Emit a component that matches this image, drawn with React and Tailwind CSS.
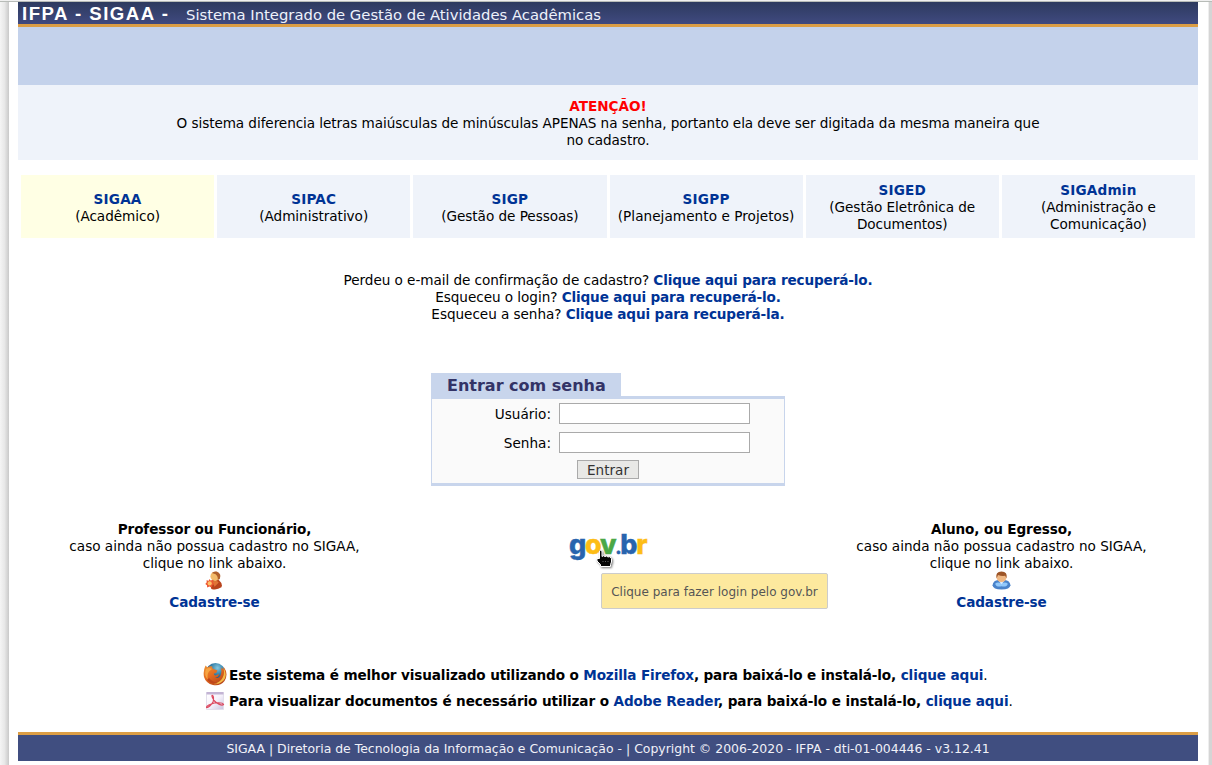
const tabs = [
  { name: 'SIGAA', lines: ['(Acadêmico)'], active: true },
  { name: 'SIPAC', lines: ['(Administrativo)'] },
  { name: 'SIGP', lines: ['(Gestão de Pessoas)'] },
  { name: 'SIGPP', lines: ['(Planejamento e Projetos)'] },
  { name: 'SIGED', lines: ['(Gestão Eletrônica de', 'Documentos)'] },
  { name: 'SIGAdmin', lines: ['(Administração e', 'Comunicação)'] },
];

function Link({ children, className = '' }) {
  return <a href="#" className={`font-bold text-[#003395] ${className}`}>{children}</a>;
}

function Header() {
  return (
    <header className="flex h-[25px] items-start whitespace-nowrap border-b-[3px] border-[#dc9e45] bg-linear-to-b from-[#2d3a5f] to-[#404a80] text-white">
      <h1 className="ml-[4px] w-[164px] font-['Liberation_Sans',sans-serif] text-[18.6px] font-bold leading-[23px] tracking-[1.5px]">IFPA - SIGAA -</h1>
      <span className="pt-[3px] text-[14.8px] leading-5 text-[#eef2fb]">Sistema Integrado de Gestão de Atividades Acadêmicas</span>
    </header>
  );
}

function TeacherIcon() {
  return (
    <svg className="-mt-px mr-[2px]" width="19" height="19" viewBox="0 0 18 18">
      <path d="M5 11 Q9 7 14 8.5 Q18 12 16.5 15.5 Q12 18.5 7 17 Z" fill="#b8431c" />
      <path d="M8 10 Q12 8 14 11 L10 15Z" fill="#df7436" />
      <circle cx="10.5" cy="5" r="4.4" fill="#f3bc6b" />
      <path d="M7.5 2 Q9 0 12 .5 Q17 2.5 15 7.5 L13 8.5 Q13.5 5 11 3Z" fill="#b0602b" />
      <path d="m5 7.500 1.300 1.500 2.500-.6-.5 2.500 1.500 1.500-1.900 1.200-.3 2.100-2.400-.9L3 15.700l-.2-2.200L1.200 12.200l1.400-1.500-.2-2 2.200.5Z" fill="#ec5833" />
      <circle cx="5.400" cy="11.800" r="2" fill="#ffc067" />
    </svg>
  );
}

function StudentIcon() {
  return (
    <svg className="-mt-px" width="19" height="19" viewBox="0 0 18 18">
      <path d="M.5 13.5 Q1 9 6 8.5 H12 Q17 9 17.5 13.5 Q17 17.5 9 17.5 Q1 17.5 .5 13.5Z" fill="#4a83ca" />
      <path d="M3 12 Q5 10 9 11.5 Q13 10 15 12 Q14 15.5 9 14.5 Q4 15.5 3 12Z" fill="#92c9fb" />
      <path d="M6 9 L9 12.5 L12 9Z" fill="#dcecff" />
      <circle cx="9" cy="5.8" r="4.7" fill="#efb884" />
      <path d="M4.2 7 Q3 .5 9 .5 Q15 .5 13.8 7 L12.5 4.5 Q9 5 5.7 3.8Z" fill="#9d5527" />
    </svg>
  );
}

function FirefoxIcon() {
  return (
    <svg className="-mt-[2px]" width="24" height="24" viewBox="0 0 24 24">
      <defs>
        <radialGradient id="globe" cx=".6" cy=".25" r=".7"><stop stopColor="#86c8df" /><stop offset=".45" stopColor="#3581aa" /><stop offset="1" stopColor="#182a5a" /></radialGradient>
        <linearGradient id="fox" x2=".7" y2="1"><stop stopColor="#ee9435" /><stop offset=".5" stopColor="#e36b20" /><stop offset="1" stopColor="#b3421a" /></linearGradient>
      </defs>
      <circle cx="12.5" cy="11" r="10" fill="url(#globe)" />
      <path d="M2.500 3.500 L4.500 5.500Q7 3.500 9.500 4.500Q8.500 6 10.500 7L14.500 8.500Q14 11 11 11.500Q10.500 13 12.500 13.500L16 12Q15.500 15.500 12 15.500Q16 17 17.500 13.500Q19 10 18 5.500L20.500 7.500L20.500 4.500Q26 12 21.500 19Q17 24.500 10 23Q3 21.500 1 15Q-.2 9 2.500 3.500Z" fill="url(#fox)" />
      <path d="M20.500 6Q25 13 20.500 18.500Q16 23 10.500 22Q17 20.500 19.500 16Q22 12 20.500 6Z" fill="#f3bb48" />
      <path d="M3 7Q.5 13 5 18Q3.500 13 6 9.500L9 7Q6 5 3 7Z" fill="#f7a442" />
      <path d="M4 18Q9 23 15 21Q9 20 6 16Z" fill="#bf461b" />
    </svg>
  );
}

function PdfIcon() {
  return (
    <svg width="20" height="20" viewBox="0 0 20 20">
      <defs><linearGradient id="paper" x2="1" y2="1"><stop stopColor="#fff" /><stop offset=".5" stopColor="#f7f3fc" /><stop offset="1" stopColor="#c9c5df" /></linearGradient></defs>
      <path d="M1.5 1.5H18.5V18.5H1.5Z" fill="url(#paper)" stroke="#e3dfec" />
      <path d="M1.5 1H18.5V3.5H1.5Z" fill="#c3b4d4" />
      <path d="M7 4.5C8.5 4 9 8 8 11C6.5 14 3 17 1.5 16.5C1 15 5.5 13 9.5 12C14 11.5 18 12 18.5 13.5C17 15 12 13 9 9.5C7.5 7 6.5 5 7 4.5Z" fill="none" stroke="#dc4a60" strokeWidth="1.2" />
    </svg>
  );
}

function Cursor() {
  return (
    <svg className="absolute left-[27px] top-[18px] drop-shadow-[1px_1px_1px_#777]" width="18" height="19" viewBox="0 0 18 19">
      <path d="M3.5 2Q4.5 .5 6 2V7.5L7.5 6.7 9 7.6 10.5 7 12 8 13.5 7.7 15.5 9.5V13L14.5 15.5V17.5H4.5V15.5L1 12V9.5H3.5Z" fill="#050505" stroke="#fff" strokeWidth="1" />
      <path d="M7 12v1M9.5 12v1M12 12v1" stroke="#777" strokeWidth=".8" />
    </svg>
  );
}

function Register({ title, icon, className }) {
  return (
    <section className={className}>
      <strong className="block tracking-[-0.12px]">{title}</strong>
      <p>caso ainda não possua cadastro no SIGAA,</p>
      <p>clique no link abaixo.</p>
      <div className="flex h-[22px] justify-center">{icon}</div>
      <Link className="tracking-[-0.1px]">Cadastre-se</Link>
    </section>
  );
}

export default function App() {
  return (
    <div className="flex h-[765px] w-[1212px] overflow-hidden bg-white font-['DejaVu_Sans',sans-serif] text-[13.6px] leading-[17px] text-black">
      <div className="w-[9px] shrink-0 bg-linear-to-r from-[#f5f5f5] via-[#e8e8e8] to-[#c9c9c9]" />
      <div className="flex h-full w-[1199px] shrink-0 flex-col bg-white px-[9px] pr-[10px]">
        <div className="relative h-[2px] shrink-0">
          <div className="absolute -left-[18px] top-0 h-[2px] w-[1212px] border-b border-[#b8bcb8] bg-[#f0f0f0]" />
        </div>
        <Header />
        <div className="h-[58px] bg-[#c4d2eb]" />
        <section className="h-[75px] bg-[#eff3fa] pt-[13px] text-center whitespace-nowrap">
          <strong className="block text-[#f00]">ATENÇÃO!</strong>
          <p className="tracking-[-0.074px]">O sistema diferencia letras maiúsculas de minúsculas APENAS na senha, portanto ela deve ser digitada da mesma maneira que<br />no cadastro.</p>
        </section>
        <nav className="mx-[3px] mt-[15px] grid h-[63px] grid-cols-6 gap-[3px]">
          {tabs.map((tab) => (
            <div key={tab.name} className={`flex flex-col items-center justify-center whitespace-nowrap pt-[2px] ${tab.active ? 'bg-[#ffffe4]' : 'bg-[#eff3fa]'}`}>
              <Link className="tracking-[0.2px]">{tab.name}</Link>
              {tab.lines.map((line) => <span key={line} className={tab.name === 'SIGPP' ? 'tracking-[0.06px]' : 'tracking-[-0.04px]'}>{line}</span>)}
            </div>
          ))}
        </nav>
        <section className="mt-[34px] text-center whitespace-nowrap tracking-[-0.05px]">
          <p>Perdeu o e-mail de confirmação de cadastro? <Link className="tracking-[-0.15px]">Clique aqui para recuperá-lo.</Link></p>
          <p>Esqueceu o login? <Link className="tracking-[-0.15px]">Clique aqui para recuperá-lo.</Link></p>
          <p>Esqueceu a senha? <Link className="tracking-[-0.15px]">Clique aqui para recuperá-la.</Link></p>
        </section>
        <form className="mx-auto mt-[50px] w-[354px]">
          <h2 className="h-[23px] w-[190px] whitespace-nowrap bg-[#c8d5ec] pl-[16px] text-[16px] font-bold leading-[26px] text-[#333366]">Entrar com senha</h2>
          <div className="h-[90px] border-x border-y-[3px] border-[#c8d5ec] bg-[#fafafa] pt-[4px]">
            <label className="mb-[8px] flex h-[21px] items-center"><span className="mr-[8px] w-[119px] pt-[2px] text-right">Usuário:</span><input className="h-[21px] w-[191px] border border-[#aaa] bg-white outline-none" /></label>
            <label className="flex h-[21px] items-center"><span className="mr-[8px] w-[119px] pt-[2px] text-right">Senha:</span><input type="password" className="h-[21px] w-[191px] border border-[#aaa] bg-white outline-none" /></label>
            <button type="button" className="mx-auto mt-[7px] flex h-[19px] w-[62px] items-center justify-center border border-[#aaa] bg-[#e8e8e6] pt-[2px] text-[#333]">Entrar</button>
          </div>
        </form>
        <div className="mt-[35px] flex h-[141px] shrink-0 text-center whitespace-nowrap">
          <Register title="Professor ou Funcionário," icon={<TeacherIcon />} className="w-[393px]" />
          <div className="relative ml-[158px] mt-[10px] h-[34px] w-[80px] text-left">
            <div className="-mt-px font-['Inter',sans-serif] text-[27px] font-extrabold leading-[30px] tracking-[-1.3px] text-[#2864ae] [-webkit-text-stroke:0.4px_currentColor]">
              g<span className="text-[#fdbd16]">o</span><span className="text-[#4ba846]">v</span><span className="text-[18px]">.</span>b<span className="text-[#fdbd16]">r</span>
            </div>
            <Cursor />
            <div role="tooltip" className="absolute left-[32px] top-[42px] flex h-[36px] w-[227px] items-center justify-center rounded-[2px] border border-[#ccc] bg-[#fde99e] pt-[2px] text-[12px] text-[#555]">Clique para fazer login pelo gov.br</div>
          </div>
          <Register title="Aluno, ou Egresso," icon={<StudentIcon />} className="ml-[156px] w-[393px]" />
        </div>
        <section className="ml-[185px] whitespace-nowrap font-bold">
          <div className="flex h-[26px] items-center tracking-[-0.13px]"><div className="w-[26px]"><FirefoxIcon /></div><p>Este sistema é melhor visualizado utilizando o <Link>Mozilla Firefox</Link>, para baixá-lo e instalá-lo, <Link>clique aqui</Link><span className="font-normal">.</span></p></div>
          <div className="flex h-[26px] items-center tracking-[-0.105px]"><div className="w-[26px] pl-[2px]"><PdfIcon /></div><p>Para visualizar documentos é necessário utilizar o <Link>Adobe Reader</Link>, para baixá-lo e instalá-lo, <Link>clique aqui</Link><span className="font-normal">.</span></p></div>
        </section>
        <footer className="mt-auto mb-[4px] flex h-[29px] shrink-0 items-center justify-center whitespace-nowrap border-t-[3px] border-[#dc9e45] bg-[#404e80] text-[12.45px] text-[#f1f1f8]">SIGAA | Diretoria de Tecnologia da Informação e Comunicação - | Copyright © 2006-2020 - IFPA - dti-01-004446 - v3.12.41</footer>
      </div>
      <div className="w-[4px] shrink-0 border-l border-[#eee] bg-[#d5d5d5]" />
    </div>
  );
}
